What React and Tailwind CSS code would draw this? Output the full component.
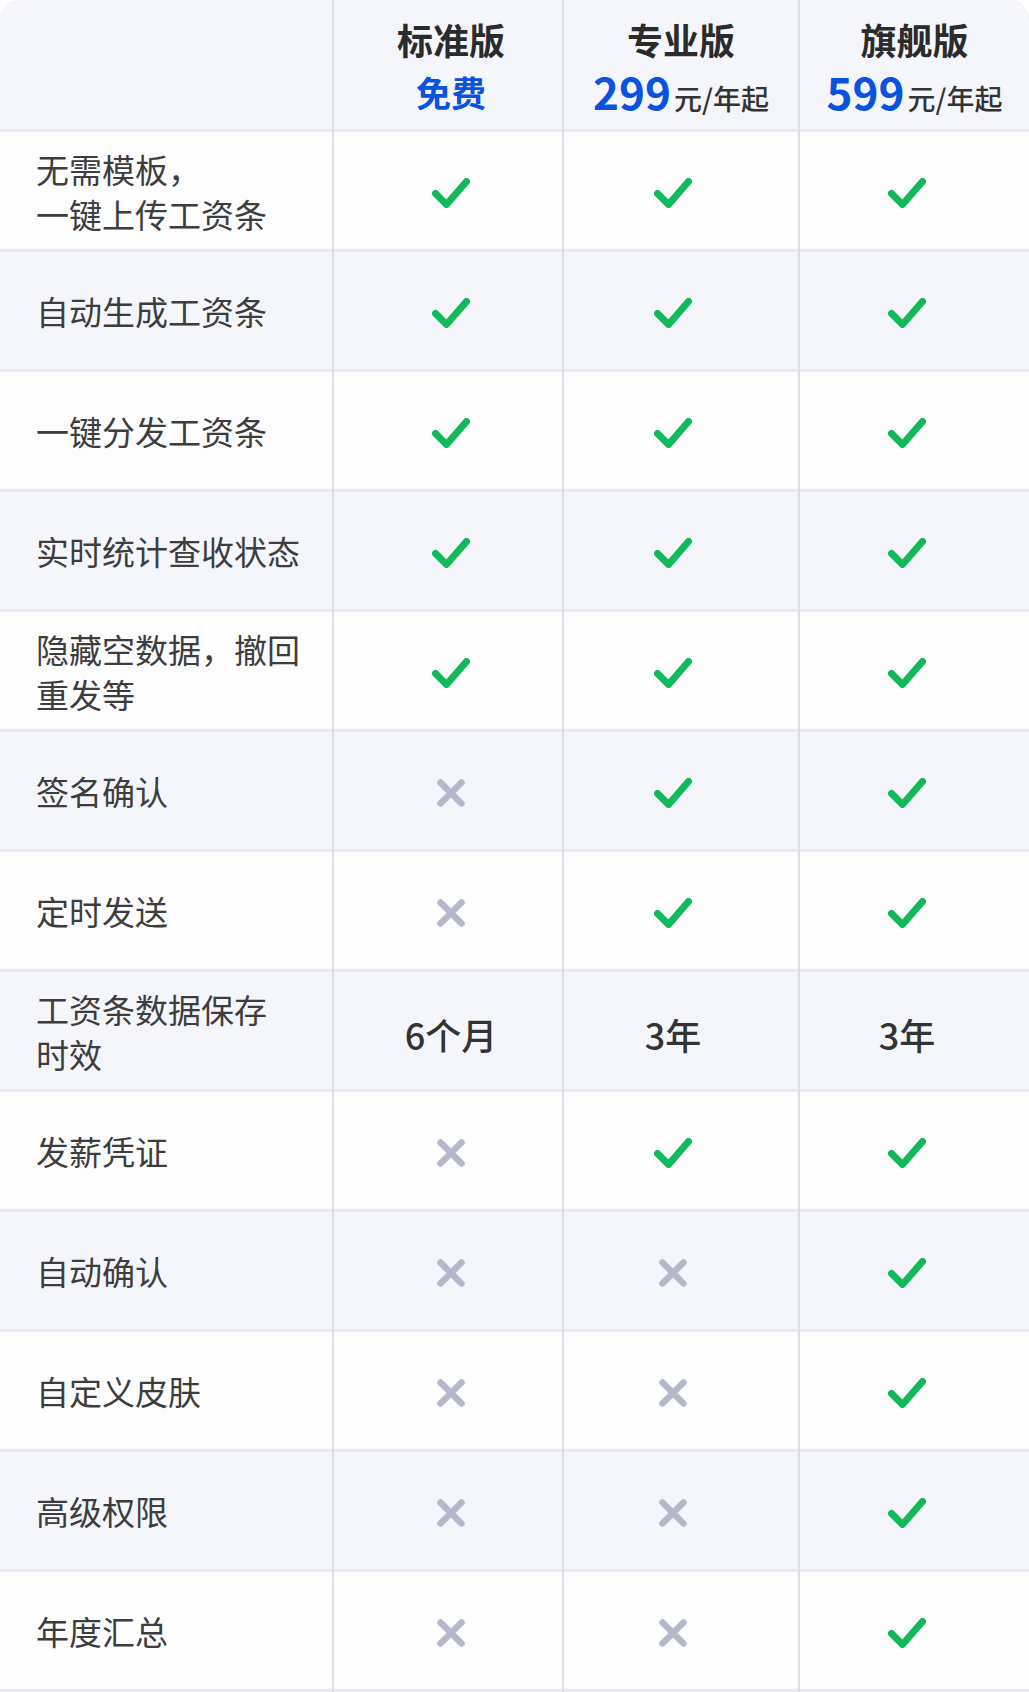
import React from "react";

const FONT = { fontFamily: '"Noto Sans CJK SC", "Noto Sans", sans-serif' };

const rows = [
  { label: ["无需模板，", "一键上传工资条"], v: [1, 1, 1] },
  { label: ["自动生成工资条"], v: [1, 1, 1] },
  { label: ["一键分发工资条"], v: [1, 1, 1] },
  { label: ["实时统计查收状态"], v: [1, 1, 1] },
  { label: ["隐藏空数据，撤回", "重发等"], v: [1, 1, 1] },
  { label: ["签名确认"], v: [0, 1, 1] },
  { label: ["定时发送"], v: [0, 1, 1] },
  { label: ["工资条数据保存", "时效"], v: ["6个月", "3年", "3年"] },
  { label: ["发薪凭证"], v: [0, 1, 1] },
  { label: ["自动确认"], v: [0, 0, 1] },
  { label: ["自定义皮肤"], v: [0, 0, 1] },
  { label: ["高级权限"], v: [0, 0, 1] },
  { label: ["年度汇总"], v: [0, 0, 1] },
];

function Check() {
  return (
    <svg width="38" height="30" viewBox="0 0 38 30" className="mt-[4px]">
      <path
        d="M3.5 15.5 L14.5 26.5 L34.5 3.5"
        fill="none"
        stroke="#10b95a"
        strokeWidth="7"
        strokeLinecap="round"
        strokeLinejoin="round"
      />
    </svg>
  );
}

function Cross() {
  return (
    <svg width="28" height="28" viewBox="0 0 28 28" className="mt-[4px]">
      <path
        d="M3.5 3.5 L24.5 24.5 M24.5 3.5 L3.5 24.5"
        fill="none"
        stroke="#b4b8ca"
        strokeWidth="6.5"
        strokeLinecap="round"
      />
    </svg>
  );
}

function Value({ v }) {
  if (v === 1) return <Check />;
  if (v === 0) return <Cross />;
  return (
    <span className="mt-[6px] text-[36px] leading-[44px] font-medium text-[#333333]">{v}</span>
  );
}

const GRID = "grid grid-cols-[332px_228px_234px_229px] gap-x-[2px]";
const offsets = ["pl-[6px]", "pr-[16px]", "pr-[15px]"];

export default function App() {
  return (
    <div className="w-[1029px] h-[1692px] bg-white" style={FONT}>
      <div className="rounded-t-[20px] overflow-hidden bg-[#dcdfea]">
        {/* header */}
        <div className={GRID}>
          <div className="h-[132px] bg-[#f5f6fb] border-b-[3px] border-[#e8e9f1]" />
          <div className="h-[132px] bg-[#f5f6fb] border-b-[3px] border-[#e8e9f1] flex flex-col items-center pt-[17px] pl-[6px]">
            <div className="text-[36px] leading-[44px] font-bold text-[#2b2b2b]">标准版</div>
            <div className="mt-[8px] text-[35px] leading-[46px] font-bold text-[#0a52e0]">免费</div>
          </div>
          <div className="h-[132px] bg-[#f5f6fb] border-b-[3px] border-[#e8e9f1] flex flex-col items-center pt-[17px]">
            <div className="text-[36px] leading-[44px] font-bold text-[#2b2b2b]">专业版</div>
            <div className="mt-[6px] flex items-baseline">
              <span className="text-[44px] leading-[48px] font-bold text-[#0a52e0]">299</span>
              <span className="ml-[3px] text-[28px] leading-[30px] font-medium text-[#333333]">元/年起</span>
            </div>
          </div>
          <div className="h-[132px] bg-[#f5f6fb] border-b-[3px] border-[#e8e9f1] flex flex-col items-center pt-[17px]">
            <div className="text-[36px] leading-[44px] font-bold text-[#2b2b2b]">旗舰版</div>
            <div className="mt-[6px] flex items-baseline">
              <span className="text-[44px] leading-[48px] font-bold text-[#0a52e0]">599</span>
              <span className="ml-[3px] text-[28px] leading-[30px] font-medium text-[#333333]">元/年起</span>
            </div>
          </div>
        </div>
        {rows.map((r, i) => {
          const bg = i % 2 === 0 ? "bg-[#fdfdfe]" : "bg-[#f5f6fb]";
          return (
            <div key={i} className={GRID}>
              <div className={`h-[120px] ${bg} border-b-[3px] border-[#e8e9f1] flex flex-col justify-center pl-[36px] pt-[2px]`}>
                {r.label.map((l, j) => (
                  <div key={j} className="text-[33px] leading-[45px] text-[#3d3d3d] whitespace-nowrap">
                    {l}
                  </div>
                ))}
              </div>
              {r.v.map((v, k) => (
                <div
                  key={k}
                  className={`h-[120px] ${bg} border-b-[3px] border-[#e8e9f1] flex items-center justify-center ${offsets[k]}`}
                >
                  <Value v={v} />
                </div>
              ))}
            </div>
          );
        })}
      </div>
    </div>
  );
}
